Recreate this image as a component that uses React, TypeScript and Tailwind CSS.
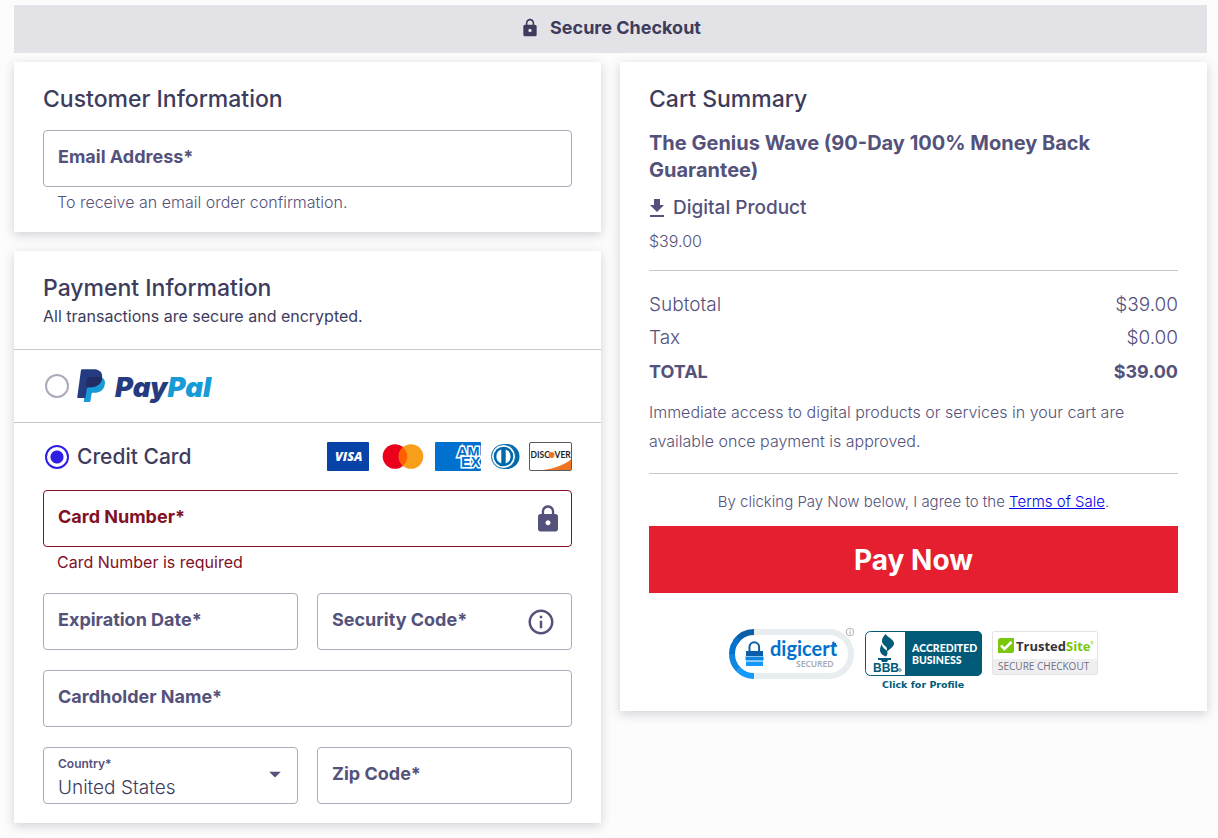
import { useState } from "react";
import { twMerge } from "tailwind-merge";
import { MdLock, MdInfoOutline, MdArrowDropDown } from "react-icons/md";

interface FieldProps {
    id: string;
    label: string;
    type?: string;
    error?: string;
    hint?: string;
    icon?: React.ReactNode;
}

const Field: React.FC<FieldProps> = ({ id, label, type = "text", error, hint, icon }) => {
    const [value, setValue] = useState("");

    return (
        <div>
            <div className={twMerge("relative flex h-[57px] items-center rounded border border-[#acaab9]", error && "border-[#811025]")}>
                <input
                    id={id}
                    type={type}
                    required
                    value={value}
                    onChange={(e) => setValue(e.target.value)}
                    aria-describedby={error || hint ? `${id}-note` : undefined}
                    className="h-full w-full min-w-0 bg-transparent px-3.5 pt-4 text-lg outline-none"
                />
                <label
                    htmlFor={id}
                    className={twMerge(
                        "pointer-events-none absolute left-3.5 text-lg leading-6 font-bold",
                        value ? "top-1 text-xs" : "top-3.5",
                        error && "text-[#811025]"
                    )}
                >
                    {label}
                </label>
                {icon && <span className="shrink-0 pr-2">{icon}</span>}
            </div>
            {(error || hint) && (
                <p id={`${id}-note`} className={twMerge("px-3.5 pt-[3px] text-base leading-6 font-light", error && "font-normal text-[#811025]")}>
                    {error || hint}
                </p>
            )}
        </div>
    );
};

const Card: React.FC<{ className?: string; children: React.ReactNode }> = ({ className, children }) => (
    <section className={twMerge("bg-white shadow-[0_3px_10px_rgba(61,60,92,0.22)]", className)}>{children}</section>
);

const Radio: React.FC<{ id: string; checked: boolean; onChange: () => void }> = ({ id, checked, onChange }) => (
    <input
        id={id}
        type="radio"
        name="method"
        checked={checked}
        onChange={onChange}
        className="m-0.5 size-6 shrink-0 appearance-none rounded-full border-2 border-[#acaab9] checked:border-[#2d1fe3] checked:bg-[radial-gradient(#2d1fe3_0_6px,white_7px)]"
    />
);

const PayPalLogo = () => (
    <svg width="138" height="34" viewBox="0 0 138 34" role="img" aria-label="PayPal">
        <path fill="#179bd7" d="M25.2 8.800c2.400 1.500 3.200 3.800 2.600 6.600-1.100 5.800-4.900 8.300-10.700 8.300h-1.300c-.7 0-1.100.4-1.200 1.100l-1.100 7c-.1.8-.6 1.200-1.400 1.200H7.800c-.7 0-1.100-.4-1-1.100L9.500 14l.6-5.200z" />
        <path fill="#253b80" d="M5.100.3h11.400c5.500 0 9.300 2.600 8.700 8.500-1.100 6.400-4.800 9.400-11.200 9.400h-2.500c-.8 0-1.400.5-1.600 1.300l-1.500 9.600H1.200c-.7 0-1-.4-.9-1.100L3.900 1.500C4 .7 4.400.3 5.100.3z" />
        <path fill="#222d65" d="M25.200 8.800c-2.100-.8-5.200-.8-7.700-.8h-5.400c-1 0-1.700.5-1.900 1.500L8.500 20.200c.2-1.300.8-2 2.100-2H14c6.300 0 10.100-3.100 11.200-9.400z" />
        <text x="38" y="28" fontFamily="Inter, sans-serif" fontSize="27.500" fontStyle="italic" fontWeight="900">
            <tspan fill="#253b80">Pay</tspan>
            <tspan fill="#179bd7">Pal</tspan>
        </text>
    </svg>
);

const CardBrands = () => (
    <svg width="245" height="29" viewBox="0 0 245 29" role="img" aria-label="Visa, Mastercard, American Express, Diners Club, Discover">
        <rect width="42" height="29" rx="1" fill="#0742a6" />
        <text x="8" y="19" fontFamily="Open Sans, sans-serif" fontSize="12.500" fontStyle="italic" fontWeight="800" fill="white">VISA</text>
        <circle cx="68" cy="14.500" r="12.300" fill="#eb001b" />
        <circle cx="84" cy="14.500" r="12.300" fill="#f79e1b" />
        <path fill="#ff5f00" d="M76 5.200a12.300 12.300 0 0 1 0 18.600 12.300 12.300 0 0 1 0-18.600z" />
        <rect x="108" width="46" height="29" rx="1" fill="#0071ce" />
        <text y="14.500" fontFamily="Liberation Sans, sans-serif" fontSize="14.500" fontWeight="700" fill="#0071ce" stroke="white" strokeWidth="3" paintOrder="stroke">
            <tspan x="130">AM</tspan>
            <tspan x="134" dy="10.500">EX</tspan>
        </text>
        <path fill="#0069aa" d="M176 2h4a12.500 12.500 0 0 1 0 25h-4z" />
        <circle cx="176.500" cy="14.500" r="12" fill="white" stroke="#0069aa" />
        <circle cx="176.500" cy="14.500" r="9.800" fill="#0069aa" />
        <path fill="white" d="M174.300 7.600v13.800a7.300 7.300 0 0 1 0-13.800zM178.700 7.600v13.800a7.300 7.300 0 0 0 0-13.800z" />
        <rect x="202.500" y=".5" width="42" height="28" rx="1.500" fill="white" stroke="#5a5a5a" />
        <path fill="#ee7623" d="M216 28c12-1.500 22-5.500 28-10.500V28z" />
        <g fontFamily="Lato, sans-serif" fontSize="8.500" fontWeight="700" fill="#231f20">
            <text x="203.500" y="16">DISC</text>
            <text x="227.500" y="16">VER</text>
        </g>
        <circle cx="224.500" cy="13" r="3" fill="#ee7623" />
    </svg>
);

const DigicertSeal = () => (
    <svg width="126" height="52" viewBox="0 0 126 52" role="img" aria-label="DigiCert Secured">
        <path fill="none" stroke="#e8edf0" strokeWidth="6" d="M25 5h75a22 22 0 0 1 0 44H25" />
        <path fill="none" stroke="#0a5ea8" strokeWidth="6" d="M25 5A22 22 0 0 0 6.500 15" />
        <path fill="none" stroke="#0072ce" strokeWidth="6" d="M9.400 11.500A22 22 0 0 0 3 27" />
        <path fill="none" stroke="#0f86e0" strokeWidth="6" d="M3 27a22 22 0 0 0 6.500 15.600" />
        <path fill="none" stroke="#1499ff" strokeWidth="6" d="M9.500 42.600A22 22 0 0 0 25 49" />
        <path fill="none" stroke="#0a5ea8" strokeWidth="2" d="M20.500 25v-5a4.800 4.800 0 0 1 9.600 0v5" />
        <path fill="#0a5ea8" d="M17 24h17v5H17z" />
        <path fill="#0f86e0" d="M16.500 29.500h18v4h-18z" />
        <path fill="#1499ff" d="M17 34.500h17v4.500H17z" />
        <text x="41" y="29" fontFamily="Lato, sans-serif" fontSize="20" fontWeight="700" fill="#0072ce">digicert</text>
        <circle cx="106" cy="17" r="1.300" fill="#0072ce" />
        <text x="67" y="39.500" fontFamily="Open Sans, sans-serif" fontSize="8.500" fontWeight="600" fill="#a5a5b2">SECURED</text>
        <circle cx="121" cy="5" r="3.800" fill="white" stroke="#9fa0aa" strokeWidth=".8" />
        <path stroke="#9fa0aa" d="M121 4.500v2.800M121 2.700v1" />
    </svg>
);

const BbbSeal = () => (
    <svg width="117" height="64" viewBox="0 -4 117 64" role="img" aria-label="BBB Accredited Business, click for profile">
        <rect x=".5" y=".5" width="116" height="44" rx="5" fill="white" stroke="#005a78" />
        <path fill="#005a78" d="M40 0h72a5 5 0 0 1 5 5v35a5 5 0 0 1-5 5H40z" />
        <path fill="#005a78" d="M20.500 3c2.500 3.500 8.500 5.500 8.500 9.500 0 3.500-4 5-7.500 8.500 1-3.500.5-4.500-2-6.500-4-3.500-3-7 1-11.500zM17 13c-.5 4.500 6 5.500 5.500 9 0 1.500-.8 2.500-1.500 3.500-3-1-6-3-6-6.500 0-2.500 1-4.500 2-6zM13 27h13v2h-3l-1 2h-5l-1-2h-3z" />
        <text x="8" y="41" fontFamily="Liberation Sans, sans-serif" fontSize="12" fontWeight="700" fill="#005a78">BBB</text>
        <circle cx="35" cy="39" r="1.300" fill="none" stroke="#005a78" strokeWidth=".7" />
        <g fontFamily="Lato, sans-serif" fontSize="10.500" fontWeight="900" fill="white">
            <text x="47" y="21">ACCREDITED</text>
            <text x="47" y="33">BUSINESS</text>
        </g>
        <text x="17" y="57" fontFamily="DejaVu Sans, sans-serif" fontSize="9.500" fontWeight="700" fill="#005a78">Click for Profile</text>
    </svg>
);

const TrustedSiteSeal = () => (
    <svg width="106" height="48" viewBox="0 -4 106 48" role="img" aria-label="TrustedSite secure checkout">
        <rect x=".5" y=".5" width="105" height="43" rx="1.500" fill="white" stroke="#e4e4e8" />
        <path fill="#efeff2" d="M1 28h104v15H1z" />
        <path fill="#7ac70c" d="M8.500 7H22v12.500a2.500 2.500 0 0 1-2.500 2.500H6V9.500A2.500 2.500 0 0 1 8.500 7z" />
        <path fill="none" stroke="white" strokeWidth="2.600" d="M9 14.500l3.500 3.500 7-7" />
        <text x="24" y="20" fontFamily="Open Sans, sans-serif" fontSize="13" fontWeight="700">
            <tspan fill="#343438">Trusted</tspan>
            <tspan fill="#7ac70c">Site</tspan>
        </text>
        <circle cx="100" cy="11.500" r="1.200" fill="none" stroke="#7ac70c" strokeWidth=".6" />
        <text x="6" y="39" fontFamily="Open Sans, sans-serif" fontSize="10" fill="#70707e">SECURE CHECKOUT</text>
    </svg>
);

const totals = [
    { label: "Subtotal", amount: "$39.00" },
    { label: "Tax", amount: "$0.00" },
];

const App = () => {
    const [method, setMethod] = useState("card");
    const [country, setCountry] = useState("United States");

    return (
        <div className="min-h-screen bg-[#fcfcfc] pt-[5px] pr-[11px] pb-4 pl-3.5 font-['Inter',sans-serif] text-[#54527b]">
            <header className="flex h-12 items-center justify-center gap-2.5 bg-[#e3e2e7] pb-0.5 text-[#3d3c5c]">
                <MdLock className="size-5" />
                <h1 className="text-lg font-bold">Secure Checkout</h1>
            </header>

            <main className="mt-[9px] grid grid-cols-1 items-start gap-[19px] md:grid-cols-2">
                <div className="flex flex-col gap-[19px]">
                    <Card className="px-[29px] pt-[21px] pb-[18px]">
                        <h2 className="text-[23px] leading-8 font-medium text-[#3d3c5c]">Customer Information</h2>
                        <div className="mt-[15px]">
                            <Field id="email" type="email" label="Email Address*" hint="To receive an email order confirmation." />
                        </div>
                    </Card>

                    <Card className="pt-[21px] pb-[19px]">
                        <div className="px-[29px] pb-[21px]">
                            <h2 className="text-[23px] leading-8 font-medium text-[#3d3c5c]">Payment Information</h2>
                            <p className="text-base leading-6 text-[#3d3c5c]">All transactions are secure and encrypted.</p>
                        </div>

                        <div className="flex h-[74px] items-center gap-1.5 border-y border-[#c9c8d0] px-[29px]">
                            <Radio id="paypal" checked={method === "paypal"} onChange={() => setMethod("paypal")} />
                            <label htmlFor="paypal"><PayPalLogo /></label>
                        </div>

                        <div className="px-[29px]">
                            <div className="flex h-[67px] items-center gap-1.5">
                                <Radio id="card" checked={method === "card"} onChange={() => setMethod("card")} />
                                <label htmlFor="card" className="flex-1 text-[21px] font-medium text-[#3d3c5c]">Credit Card</label>
                                <CardBrands />
                            </div>
                            <Field id="number" label="Card Number*" error="Card Number is required" icon={<MdLock className="size-[30px]" />} />
                            <div className="mt-[19px] grid grid-cols-2 gap-x-[19px] gap-y-5">
                                <Field id="expiry" label="Expiration Date*" />
                                <Field id="cvv" label="Security Code*" icon={<MdInfoOutline className="mr-[7px] size-[30px]" />} />
                                <div className="col-span-2">
                                    <Field id="holder" label="Cardholder Name*" />
                                </div>
                                <div className="relative h-[57px] rounded border border-[#acaab9]">
                                    <label htmlFor="country" className="absolute top-2 left-3.5 text-xs leading-4 font-semibold">Country*</label>
                                    <select
                                        id="country"
                                        value={country}
                                        onChange={(e) => setCountry(e.target.value)}
                                        className="h-full w-full appearance-none bg-transparent px-3.5 pt-6 text-[19px] leading-6 font-light text-[#3d3c5c] outline-none"
                                    >
                                        <option>United States</option>
                                        <option>Canada</option>
                                    </select>
                                    <MdArrowDropDown className="pointer-events-none absolute top-3 right-2 size-7" />
                                </div>
                                <Field id="zip" label="Zip Code*" />
                            </div>
                        </div>
                    </Card>
                </div>

                <Card className="px-[29px] pt-[21px] pb-5">
                    <h2 className="text-[23px] leading-8 font-medium text-[#3d3c5c]">Cart Summary</h2>
                    <h3 className="mt-[15px] text-xl leading-[27px] font-bold">The Genius Wave (90-Day 100% Money Back Guarantee)</h3>
                    <p className="mt-2.5 flex items-center gap-2 text-[19px] leading-7 font-medium">
                        <svg width="16" height="18" viewBox="0 0 16 18" fill="currentColor" aria-hidden="true">
                            <path d="M5 0h6v6h4l-7 7-7-7h4zM1 16h14v2H1z" />
                        </svg>
                        Digital Product
                    </p>
                    <p className="mt-[7px] text-base leading-6 font-light">$39.00</p>

                    <dl className="mt-[17px] border-t border-[#c9c8d0] pt-[17px] text-[19px] leading-[33px] font-light">
                        {totals.map((row) => (
                            <div key={row.label} className="flex justify-between">
                                <dt>{row.label}</dt>
                                <dd>{row.amount}</dd>
                            </div>
                        ))}
                        <div className="flex justify-between text-lg leading-[35px] font-bold">
                            <dt>TOTAL</dt>
                            <dd>$39.00</dd>
                        </div>
                    </dl>
                    <p className="mt-[9px] border-b border-[#c9c8d0] pb-[17px] text-base leading-[29px] font-light">
                        Immediate access to digital products or services in your cart are available once payment is approved.
                    </p>

                    <p className="mt-4 text-center text-[15px] leading-6 font-light">
                        By clicking Pay Now below, I agree to the <a href="#terms" className="text-[#0000ee] underline">Terms of Sale</a>.
                    </p>
                    <button type="button" className="mt-3 h-[67px] w-full bg-[#e51f2f] text-[28px] font-bold text-white">Pay Now</button>

                    <div className="mt-[34px] flex items-start justify-center gap-2.5">
                        <DigicertSeal />
                        <BbbSeal />
                        <TrustedSiteSeal />
                    </div>
                </Card>
            </main>
        </div>
    );
};

export default App;
